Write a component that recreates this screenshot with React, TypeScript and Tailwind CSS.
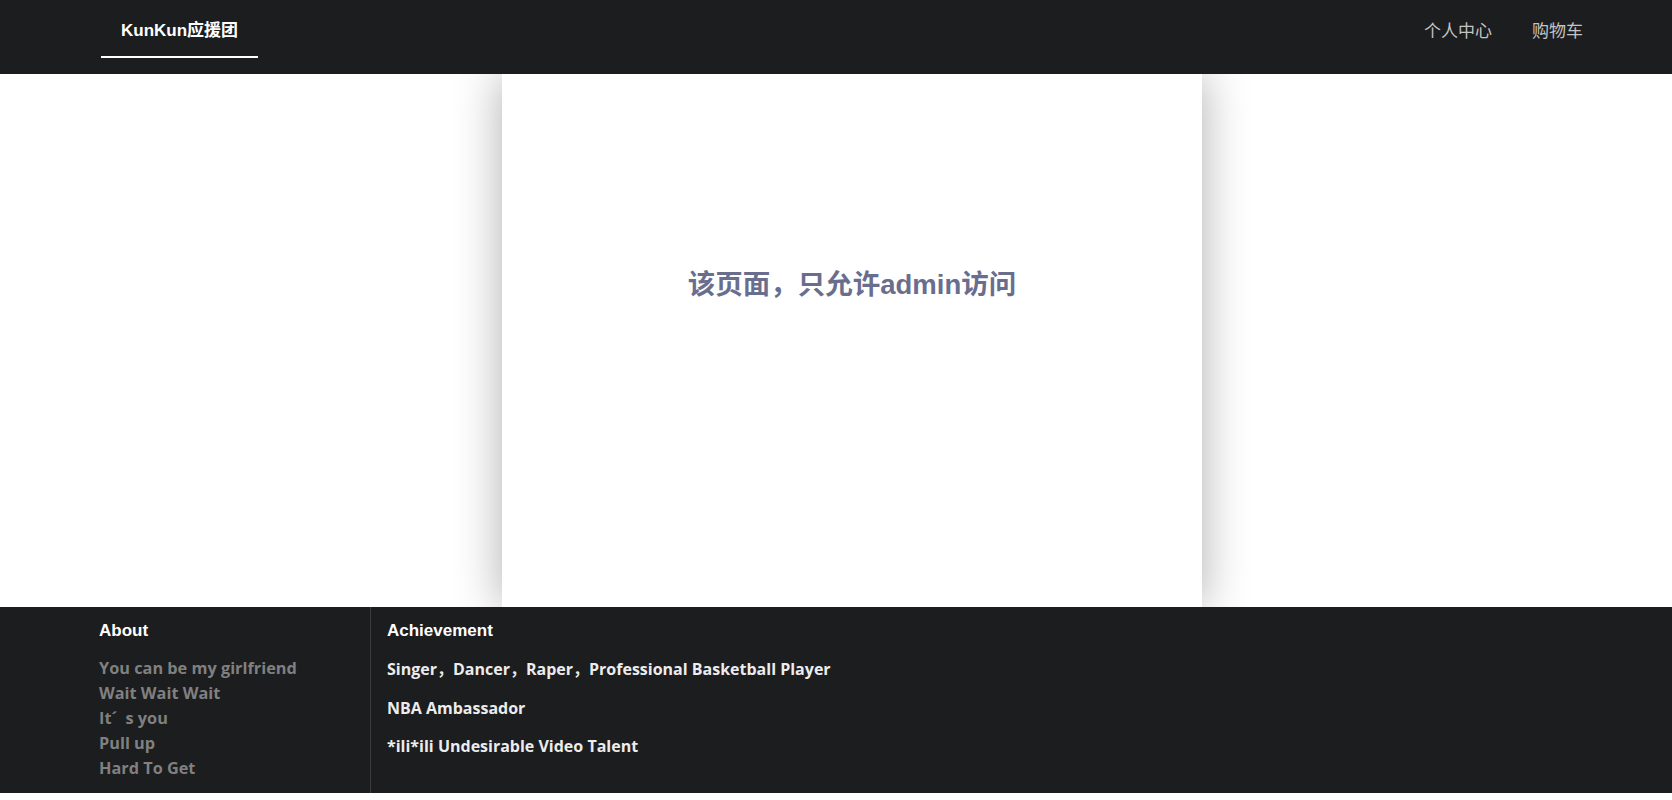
import React from 'react';

const aboutLinks = ['You can be my girlfriend', 'Wait Wait Wait', 'ITS', 'Pull up', 'Hard To Get'];
const achievements = [
  'Singer，Dancer，Raper，Professional Basketball Player',
  'NBA Ambassador',
  '*ili*ili Undesirable Video Talent',
];

const cjk = "font-['Liberation_Sans','Noto_Sans_CJK_SC',sans-serif]";
const yahei = "font-['Open_Sans','Noto_Sans_CJK_SC',sans-serif]";

function Header() {
  return (
    <header className={`h-[74px] bg-[#1c1d1f] flex items-stretch justify-between relative z-10 ${cjk}`}>
      <div className="pl-[101px] flex">
        <a className="flex items-center h-[58px] px-[20px] border-b-2 border-white text-white text-[17px] font-bold pt-[6px]">
          KunKun应援团
        </a>
      </div>
      <nav className="flex items-center pr-[69px] pb-[10px] text-[17px] text-[#c4c4c4]">
        <a className="px-[20px]">个人中心</a>
        <a className="px-[20px]">购物车</a>
      </nav>
    </header>
  );
}

function Footer() {
  return (
    <footer className="h-[186px] bg-[#1c1d1f] flex relative z-10">
      <div className="w-[371px] pl-[99px] pt-[11px] border-r border-[#3a3a3a]">
        <h3 className={`text-white text-[17px] font-bold leading-[26px] ${cjk}`}>About</h3>
        <ul className={`mt-[12px] text-[#808080] text-[16.3px] font-bold leading-[25px] ${yahei}`}>
          {aboutLinks.map((l) =>
            l === 'ITS' ? (
              <li key={l}>
                It<span className="inline-block w-[14px]">´</span>s you
              </li>
            ) : (
              <li key={l}>{l}</li>
            )
          )}
        </ul>
      </div>
      <div className="pl-[16px] pt-[11px]">
        <h3 className={`text-white text-[17px] font-bold leading-[26px] ${cjk}`}>Achievement</h3>
        <div className={`text-[#ececec] text-[16px] font-bold ${yahei}`}>
          {achievements.map((a) => (
            <p key={a} className="mt-[12px] leading-[26.5px]">{a}</p>
          ))}
        </div>
      </div>
    </footer>
  );
}

export default function App() {
  return (
    <div className="w-[1672px] h-[800px] bg-white overflow-hidden">
      <Header />
      <main className="h-[533px] flex">
        <div className="ml-[502px] w-[700px] h-full bg-white shadow-[0_0_45px_rgba(0,0,0,0.32)] pt-[194px] text-center">
          <h2 className={`text-[27.5px] leading-[34px] font-bold text-[#6a6e8e] ${cjk}`}>该页面，只允许admin访问</h2>
        </div>
      </main>
      <Footer />
    </div>
  );
}
